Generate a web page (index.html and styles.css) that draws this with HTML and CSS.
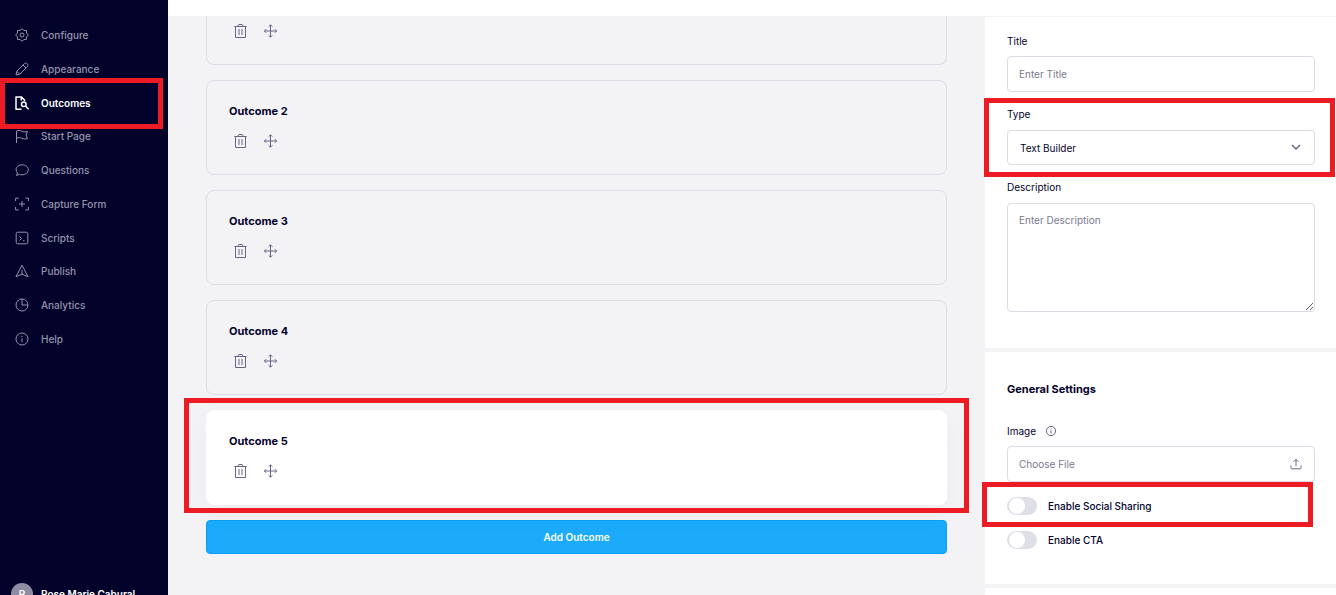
FILE: index.html
```html
<!DOCTYPE html>
<html lang="en">
<head>
<meta charset="utf-8">
<title>Outcomes</title>
<meta name="viewport" content="width=device-width, initial-scale=1">
<link rel="stylesheet" href="styles.css">
</head>
<body>
<svg class="sprite" aria-hidden="true">
  <symbol id="trash" viewBox="0 0 16 16"><path d="M2.300 3.500h12.400M3.500 3.500v11h10v-11M5.800 3.300l1-1.800h3.400l1 1.800M7 6v6M10 6v6"/></symbol>
  <symbol id="move" viewBox="0 0 16 16"><path d="M8.500 2v12M2.500 8h12M6.700 3.600l1.800-1.800 1.800 1.800M6.700 12.400l1.800 1.800 1.800-1.800M4.100 6.200L2.300 8l1.800 1.800M12.900 6.200L14.700 8l-1.800 1.800"/></symbol>
</svg>
<div class="app">
  <aside class="sidebar">
    <nav>
      <ul class="nav">
        <li><a class="nav-link" href="#"><svg class="icon" viewBox="0 0 14 14"><path d="M13.300 7l-1.700 1.900-.15 2.550-2.550.15L7 13.300l-1.900-1.700-2.550-.15L2.400 8.900.7 7l1.700-1.900.15-2.550 2.550-.15L7 .7l1.900 1.700 2.550.15.15 2.550z"/><circle cx="7" cy="7" r="2"/></svg>Configure</a></li>
        <li><a class="nav-link" href="#"><svg class="icon" viewBox="0 0 14 14"><path d="M1 13l.8-3.800 7.600-7.600c1.800-1.800 4.800 1.200 3 3L4.800 12.200zM8 3l3 3M1.800 9.300l2.900 2.900"/></svg>Appearance</a></li>
        <li class="nav-current"><a class="nav-link" href="#" aria-current="page"><svg class="icon" viewBox="0 0 14 14"><path d="M6.500 13.200H1V1h5.500l3 3v1M6.300 1v3.500"/><circle cx="8.800" cy="8.300" r="2.300"/><path d="M10.500 10l3.200 3.200"/></svg>Outcomes</a><span class="highlight highlight-nav"></span></li>
        <li><a class="nav-link" href="#"><svg class="icon" viewBox="0 0 14 14"><path d="M1.500 14V2c2-1 3.500-.6 5.300.2s3.500 1 5.700.2L11 6l1.500 3.500c-2.200.8-3.900.6-5.700-.2s-3.300-1-5.300 0"/></svg>Start Page</a></li>
        <li><a class="nav-link" href="#"><svg class="icon" viewBox="0 0 14 14"><path d="M1.500 12.500l.9-2.600C-.8 6 2.300 1.800 7 1.800c3.500 0 6.300 2.100 6.300 5s-2.800 5-6.300 5c-1 0-1.900-.1-2.700-.5z"/></svg>Questions</a></li>
        <li><a class="nav-link" href="#"><svg class="icon" viewBox="0 0 14 14"><path d="M.6 4V1.200h3M10.400 1.200h3V4M13.400 10v2.900h-3M3.600 12.900h-3V10M7 4v6M4 7h6"/></svg>Capture Form</a></li>
        <li><a class="nav-link" href="#"><svg class="icon" viewBox="0 0 14 14"><rect x="1.200" y="1.200" width="11.600" height="11.600" rx="1.500"/><path d="M4.500 5.500l2 2-2 2M8 9.700h1.500"/></svg>Scripts</a></li>
        <li><a class="nav-link" href="#"><svg class="icon" viewBox="0 0 14 14"><path d="M7 1.200l6 11.500-6-2.500-6 2.500zM7 6v4.200"/></svg>Publish</a></li>
        <li><a class="nav-link" href="#"><svg class="icon" viewBox="0 0 14 14"><circle cx="7" cy="7" r="6"/><path d="M7 1v6h6"/></svg>Analytics</a></li>
        <li><a class="nav-link" href="#"><svg class="icon" viewBox="0 0 14 14"><circle cx="7" cy="7" r="6"/><path d="M7 6.300v3.900M7 3.800v1.200"/></svg>Help</a></li>
      </ul>
    </nav>
    <div class="user"><span class="avatar">R</span><span>Rose Marie Cabural</span></div>
  </aside>

  <div class="page">
    <header class="topbar"></header>
    <div class="workspace">
      <main class="outcomes">
        <section class="card card-cut">
          <div class="actions">
            <button class="icon-btn" aria-label="Delete"><svg class="icon-md"><use href="#trash"/></svg></button>
            <button class="icon-btn" aria-label="Move"><svg class="icon-md"><use href="#move"/></svg></button>
          </div>
        </section>
        <section class="card">
          <h2 class="heading">Outcome 2</h2>
          <div class="actions">
            <button class="icon-btn" aria-label="Delete"><svg class="icon-md"><use href="#trash"/></svg></button>
            <button class="icon-btn" aria-label="Move"><svg class="icon-md"><use href="#move"/></svg></button>
          </div>
        </section>
        <section class="card">
          <h2 class="heading">Outcome 3</h2>
          <div class="actions">
            <button class="icon-btn" aria-label="Delete"><svg class="icon-md"><use href="#trash"/></svg></button>
            <button class="icon-btn" aria-label="Move"><svg class="icon-md"><use href="#move"/></svg></button>
          </div>
        </section>
        <section class="card">
          <h2 class="heading">Outcome 4</h2>
          <div class="actions">
            <button class="icon-btn" aria-label="Delete"><svg class="icon-md"><use href="#trash"/></svg></button>
            <button class="icon-btn" aria-label="Move"><svg class="icon-md"><use href="#move"/></svg></button>
          </div>
        </section>
        <section class="card card-active">
          <h2 class="heading">Outcome 5</h2>
          <div class="actions">
            <button class="icon-btn" aria-label="Delete"><svg class="icon-md"><use href="#trash"/></svg></button>
            <button class="icon-btn" aria-label="Move"><svg class="icon-md"><use href="#move"/></svg></button>
          </div>
          <span class="highlight highlight-card"></span>
        </section>
        <button class="add-btn">Add Outcome</button>
      </main>

      <aside class="panel">
        <section class="panel-section fields">
          <div class="field field-tall">
            <label for="title">Title</label>
            <input class="control" id="title" type="text" placeholder="Enter Title">
          </div>
          <div class="field">
            <label for="type">Type</label>
            <div class="select-wrap">
              <select class="control" id="type"><option>Text Builder</option></select>
              <svg class="control-icon chevron" viewBox="0 0 12 12"><path d="M2 4l4 4 4-4"/></svg>
            </div>
            <span class="highlight highlight-type"></span>
          </div>
          <div class="field">
            <label for="description">Description</label>
            <textarea class="control area" id="description" placeholder="Enter Description"></textarea>
          </div>
        </section>
        <section class="panel-section general">
          <h2 class="heading">General Settings</h2>
          <div class="field field-tall image-field">
            <div class="label-row">
              <label for="image">Image</label>
              <svg class="info" viewBox="0 0 12 12"><circle cx="6" cy="6" r="4.600"/><path d="M6 5.500v3M6 3.500v1"/></svg>
            </div>
            <label class="control file">Choose File
              <input class="file-input" id="image" type="file">
              <svg class="control-icon" viewBox="0 0 12 12"><path d="M6 8V1.500M3.500 3.800L6 1.300l2.500 2.500M1 7.500v2.300c0 .6.400 1 1 1h8c.6 0 1-.4 1-1V7.500"/></svg>
            </label>
          </div>
          <div class="switches">
            <div class="switch-row">
              <input class="switch" id="sharing" type="checkbox"><label for="sharing">Enable Social Sharing</label>
              <span class="highlight highlight-switch"></span>
            </div>
            <div class="switch-row">
              <input class="switch" id="cta" type="checkbox"><label for="cta">Enable CTA</label>
            </div>
          </div>
        </section>
        <section class="panel-section rest"></section>
      </aside>
    </div>
  </div>
</div>
</body>
</html>
```

FILE: styles.css
```css
* { box-sizing: border-box; }

body {
  margin: 0;
  font: 500 10px/16px Inter, "Liberation Sans", sans-serif;
  color: #03022b;
  background: #f3f3f6;
}

button, input, select, textarea { font: inherit; color: inherit; }
svg { fill: none; stroke: currentColor; stroke-width: 1; stroke-linejoin: round; flex: none; }
.sprite { position: absolute; width: 0; height: 0; }

.app { display: flex; height: 100vh; overflow: hidden; }

/* Sidebar */
.sidebar {
  display: flex;
  flex-direction: column;
  flex: 0 0 168px;
  padding-top: 27px;
  background: #03022b;
  color: #9594ab;
}
.nav {
  display: flex;
  flex-direction: column;
  justify-content: space-between;
  height: 320px;
  margin: 0;
  padding: 0;
  list-style: none;
}
.nav-link {
  display: flex;
  align-items: center;
  gap: 12px;
  padding-left: 15px;
  color: inherit;
  text-decoration: none;
}
.nav-current { position: relative; }
.nav-current .nav-link { color: #fff; font-weight: 600; }
.nav-current .icon { stroke-width: 1.5; }
.icon { width: 14px; height: 14px; }
.user {
  display: flex;
  align-items: center;
  gap: 8px;
  margin: auto 0 -10px;
  padding-left: 11px;
  color: #fff;
  font-weight: 600;
}
.avatar {
  width: 22px;
  border-radius: 50%;
  background: #8f8da3;
  line-height: 22px;
  text-align: center;
}

/* Page */
.page { display: flex; flex: 1; flex-direction: column; min-width: 0; }
.topbar { flex: 0 0 16px; background: #fff; }
.workspace { display: flex; flex: 1; min-height: 0; }

.outcomes {
  display: flex;
  flex: 1;
  flex-direction: column;
  gap: 15px;
  padding: 0 38px;
}
.card {
  flex: none;
  padding: 22px 22px 25px;
  border: 1px solid #dcdbe8;
  border-radius: 8px;
}
.card-cut { padding-top: 7px; border-top: 0; border-radius: 0 0 8px 8px; }
.card-active {
  position: relative;
  border-color: #fff;
  background: #fff;
  box-shadow: 0 10px 30px rgba(0, 0, 0, 0.03);
}
.heading { margin: 0; font-size: 11px; font-weight: 700; line-height: 16px; }
.heading + .actions { margin-top: 14px; }
.actions { display: flex; gap: 8px; color: #67668a; }
.icon-btn {
  display: flex;
  justify-content: center;
  width: 22px;
  padding: 0;
  border: 0;
  background: none;
}
.icon-md { width: 16px; height: 16px; }
.add-btn {
  flex: none;
  height: 34px;
  border: 1px solid #08a0f7;
  border-radius: 4px;
  background: #1babfa;
  color: #fff;
  font-weight: 600;
}

/* Settings panel */
.panel {
  display: flex;
  flex: 0 0 351px;
  flex-direction: column;
  gap: 4px;
  border-top: 1px solid #f3f3f6;
}
.panel-section { padding: 16px 21px 36px 22px; background: #fff; }
.fields { display: flex; flex-direction: column; gap: 14px; }
.field {
  display: flex;
  position: relative;
  flex-direction: column;
  gap: 8px;
  font-weight: 400;
}
.control {
  display: block;
  width: 100%;
  height: 35px;
  margin: 0;
  padding: 0 12px;
  border: 1px solid #dcdbe5;
  border-radius: 4px;
  background: #fff;
  appearance: none;
}
.control::placeholder { color: #7b7a90; opacity: 1; }
.field-tall { gap: 7px; }
.field-tall .control { height: 36px; padding: 0 12px 1px 11px; }
.area { height: 109px; padding: 8px 11px; }
.select-wrap { position: relative; }
.control-icon { width: 12px; height: 12px; color: #67668a; }
.chevron { position: absolute; top: 11px; right: 13px; stroke-width: 1.5; }
.general { padding-top: 29px; padding-bottom: 35px; }
.image-field { margin-top: 26px; }
.label-row { display: flex; align-items: center; gap: 9px; }
.info { width: 12px; height: 12px; color: #67668a; }
.field-tall .file {
  display: flex;
  align-items: center;
  justify-content: space-between;
  color: #7b7a90;
}
.file-input { position: absolute; width: 1px; height: 1px; opacity: 0; }
.switches { display: flex; flex-direction: column; gap: 16px; margin-top: 15px; }
.switch-row { display: flex; position: relative; align-items: center; gap: 11px; }
.switch {
  width: 30px;
  height: 18px;
  margin: 0;
  padding: 1px 2px;
  border-radius: 9px;
  background: #dfdfe8;
  appearance: none;
}
.switch::before {
  display: block;
  width: 16px;
  height: 16px;
  border-radius: 50%;
  background: #fff;
  content: "";
}
.switch:checked::before { margin-left: auto; }
.rest { flex: 1; padding: 0; }

/* Callout frames */
.highlight { position: absolute; border: 5px solid #ed1c24; pointer-events: none; }
.highlight-nav { inset: -17px 5px -18px 0; }
.highlight-card { inset: -13px -23px -9px; }
.highlight-type { inset: -8px -20px -12px -23px; }
.highlight-switch { inset: -15px 2px -12px -25px; }
```
